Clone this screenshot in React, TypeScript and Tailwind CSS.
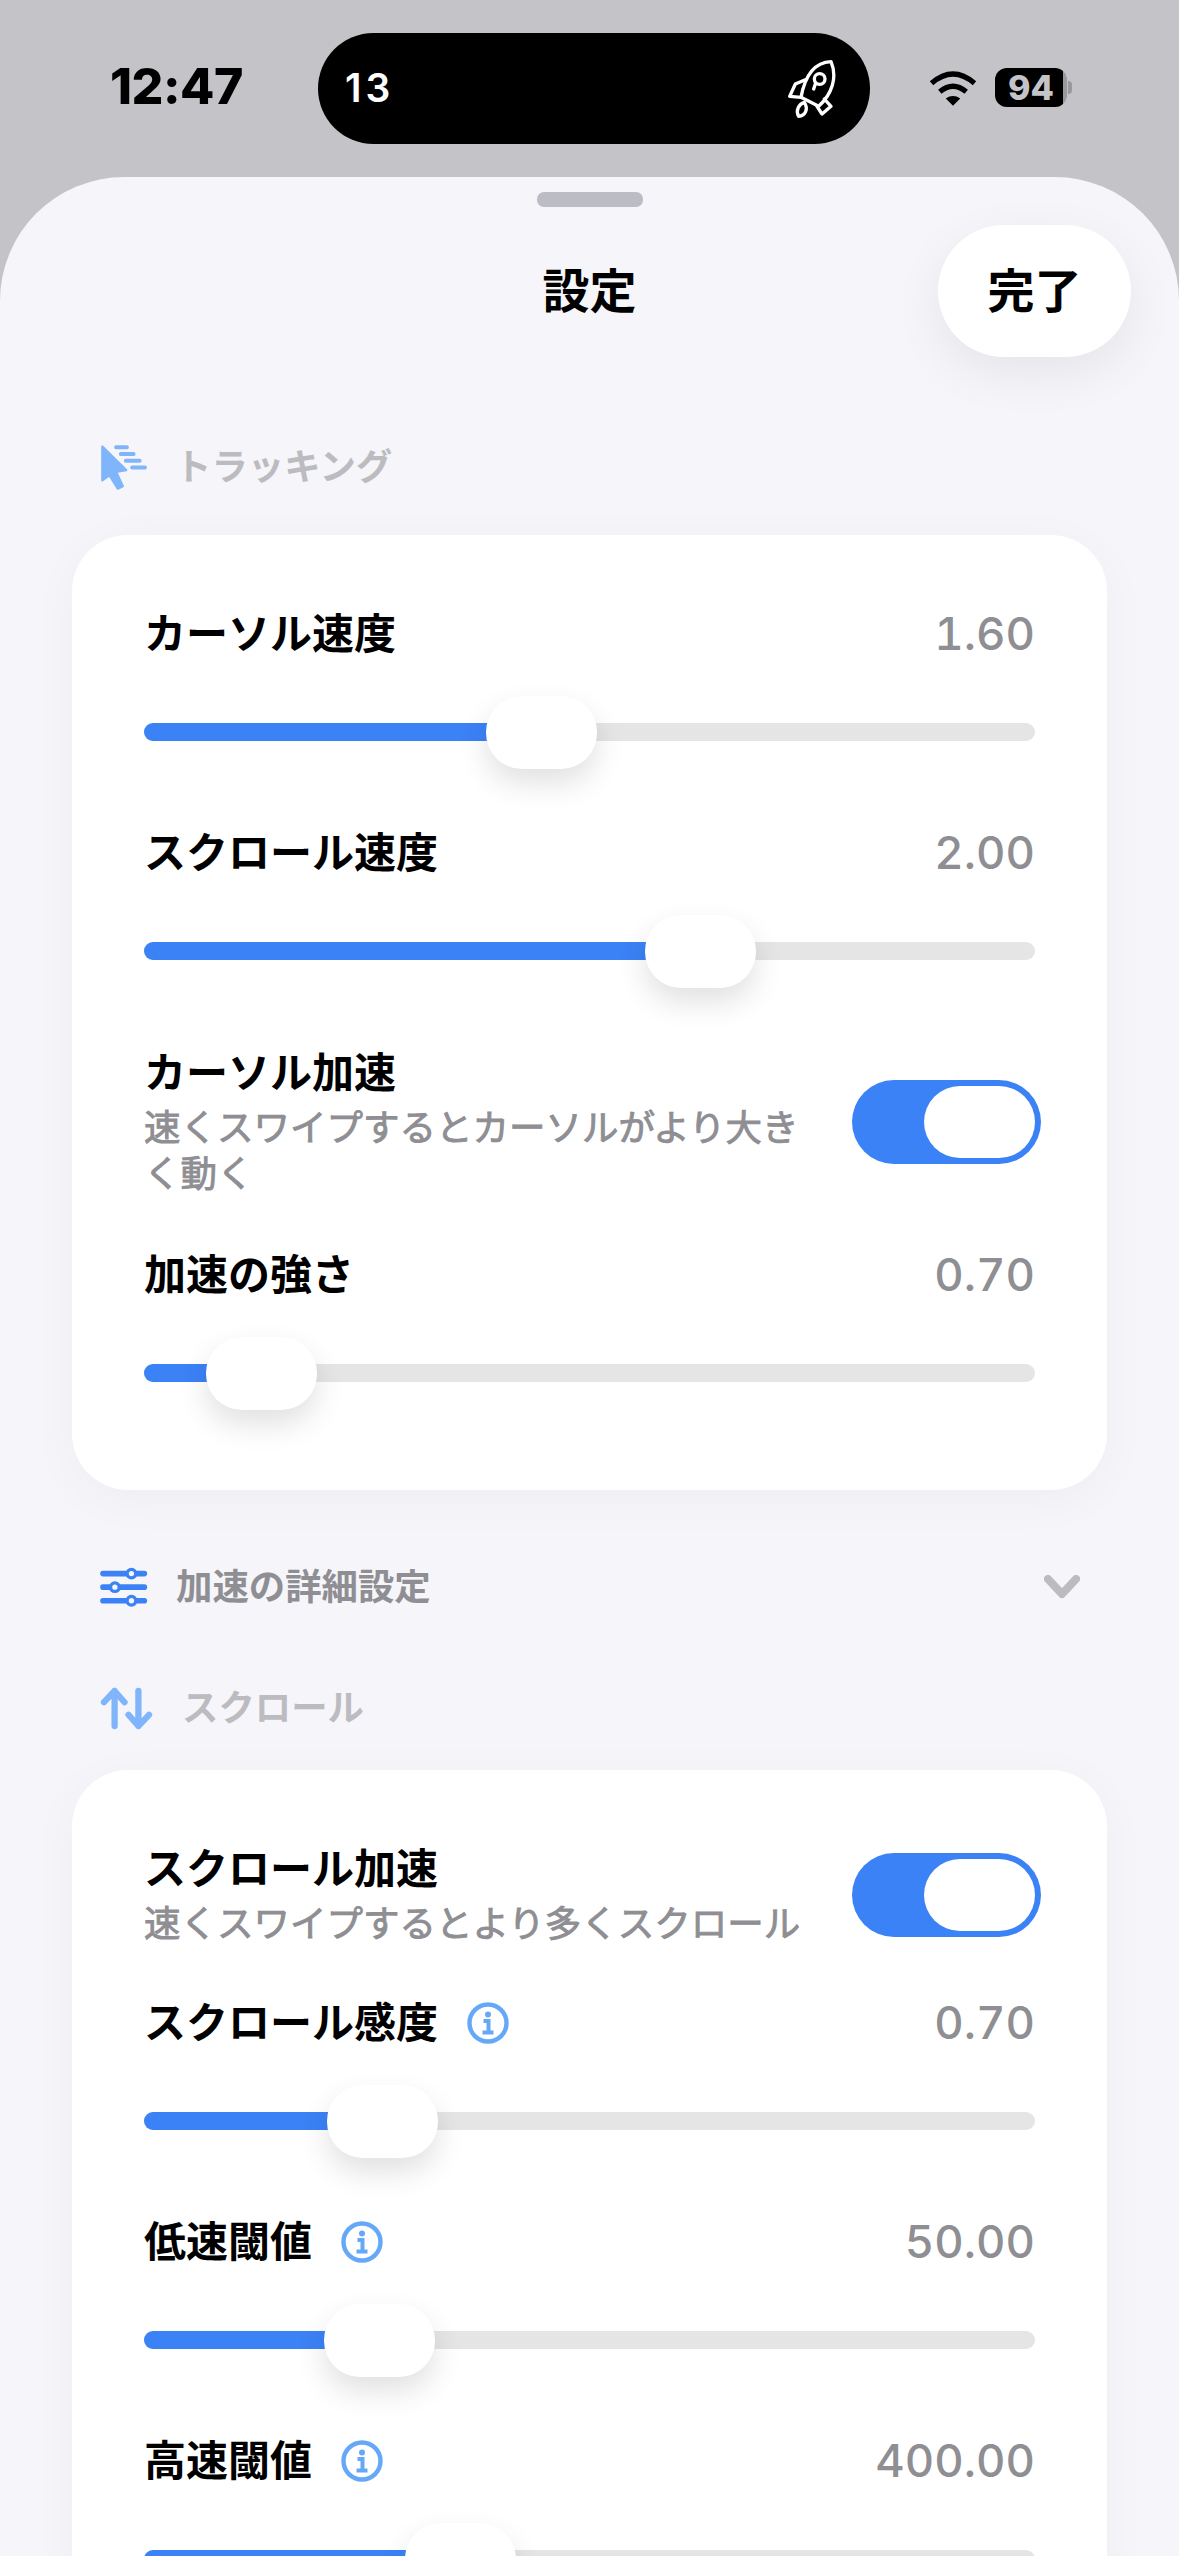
const track = 891

const Slider = ({ thumb }: { thumb: number }) => (
  <div className="relative mt-[34px] flex h-[73px] items-center">
    <div className="h-[18px] w-full overflow-hidden rounded-full bg-[#e5e5e5]">
      <div className="h-full bg-[#3b82f6]" style={{ width: (thumb / track) * 100 + '%' }} />
    </div>
    <div
      className="absolute top-[1px] h-[73px] w-[111px] rounded-[36px] bg-white shadow-[0_14px_30px_rgba(0,0,0,0.12)]"
      style={{ left: thumb - 1 }}
    />
  </div>
)

const InfoIcon = () => (
  <svg viewBox="0 0 42 42" className="h-[42px] w-[42px] shrink-0" fill="none" stroke="#66a8f8">
    <circle cx="21" cy="21" r="18.5" strokeWidth="4.4" />
    <circle cx="21" cy="12.5" r="3" fill="#66a8f8" stroke="none" />
    <path d="M16.5 19h5v11M15.5 30.5h11" strokeWidth="4" />
  </svg>
)

const Row = ({
  label,
  value,
  thumb,
  info,
  className
}: {
  label: string
  value: string
  thumb: number
  info?: boolean
  className?: string
}) => (
  <div className={className}>
    <div className="flex h-[54px] items-center justify-between">
      <div className="flex items-center gap-[29px]">
        <span className="text-[42px] leading-[54px] font-bold text-black">{label}</span>
        {info && <InfoIcon />}
      </div>
      <span className="text-[45.5px] leading-[54px] font-medium text-[#8e8e93] tabular-nums">{value}</span>
    </div>
    <Slider thumb={thumb} />
  </div>
)

const Toggle = () => (
  <div className="mr-[-6px] flex h-[84px] w-[189px] shrink-0 items-center justify-end rounded-full bg-[#3b82f6] pr-[6px]">
    <div className="h-[72px] w-[111px] rounded-full bg-white" />
  </div>
)

const ToggleRow = ({ label, sub, className }: { label: string; sub: string; className?: string }) => (
  <div className={'flex items-center justify-between ' + (className ?? '')}>
    <div className="w-[670px]">
      <div className="text-[42px] leading-[54px] font-bold text-black">{label}</div>
      <div className="mt-[5px] text-[36.5px] leading-[46px] font-normal text-[#8e8e93] [-webkit-text-stroke:0.9px_#8e8e93]">{sub}</div>
    </div>
    <Toggle />
  </div>
)

const RocketIcon = () => (
  <svg viewBox="80 120 150 180" className="h-[60px] w-[50px]" fill="none" stroke="white" strokeWidth="10" strokeLinejoin="round" strokeLinecap="round">
    <path d="M212 128C165 130 135 165 122 235L175 262C215 225 232 175 212 128Z" />
    <path d="M135 182L105 195L88 232L122 235" />
    <path d="M192 240L212 262L185 285L170 262" />
    <path d="M132 250C115 255 105 275 115 292C135 290 145 270 132 250Z" />
    <circle cx="178" cy="180" r="16" />
    <path d="M166 192L160 210" />
  </svg>
)

const WifiIcon = () => (
  <svg viewBox="505 145 150 115" className="h-[38px] w-[50px]" fill="none" stroke="black" strokeWidth="16">
    <path d="M515 188Q580 132 645 188" />
    <path d="M540 214Q580 180 620 214" />
    <path d="M558 234L580 256L602 234Q580 220 558 234Z" fill="black" stroke="none" />
  </svg>
)

const CursorIcon = () => (
  <svg viewBox="60 72 140 140" className="h-[47px] w-[47px]" fill="#7fb5fa" stroke="#7fb5fa" strokeLinecap="round" strokeLinejoin="round">
    <path d="M67 80L138 150L108 155L128 198L113 205L88 165L67 180Z" strokeWidth="7" />
    <path d="M108 82H140M122 102H160M137 122H178M156 142H194" strokeWidth="12" fill="none" />
  </svg>
)

const SlidersIcon = () => (
  <svg viewBox="60 75 145 125" className="h-[42px] w-[48px]" fill="none" stroke="#3b82f6">
    <path d="M69 97H194M69 138H194M69 179H194" strokeWidth="17" strokeLinecap="round" />
    <circle cx="155" cy="97" r="13" fill="#f5f5fa" strokeWidth="10" />
    <circle cx="105" cy="138" r="13" fill="#f5f5fa" strokeWidth="10" />
    <circle cx="155" cy="179" r="13" fill="#f5f5fa" strokeWidth="10" />
  </svg>
)

const ArrowsIcon = () => (
  <svg viewBox="60 438 160 130" className="h-[43px] w-[53px]" fill="none" stroke="#80b5fb" strokeWidth="19" strokeLinecap="round" strokeLinejoin="round">
    <path d="M104 556V450M72 484L104 450L134 484" />
    <path d="M176 450V556M146 522L176 556L208 522" />
  </svg>
)

export default function App() {
  return (
    <div className="h-[2556px] w-[1179px] overflow-hidden bg-[#c4c4c8] font-['Inter','Noto_Sans_CJK_JP',sans-serif]">
      <div className="flex h-[177px] items-start pt-[33px] pl-[110px]">
        <span className="mt-[23px] w-[132px] text-[50px] leading-[60px] font-extrabold tracking-[-0.5px] whitespace-nowrap text-black">12:47</span>
        <div className="ml-[76px] flex h-[111px] w-[552px] items-center justify-between rounded-[56px] bg-black pr-[33px] pl-[27px]">
          <span className="text-[39px] font-semibold tracking-[4px] text-white">13</span>
          <RocketIcon />
        </div>
        <div className="mt-[36px] ml-[58px]">
          <WifiIcon />
        </div>
        <div className="mt-[35px] ml-[17px] flex items-center">
          <div className="relative h-[39px] w-[72px] overflow-hidden rounded-[12px] bg-[#98989d]">
            <div className="absolute inset-y-0 left-0 w-[68px] bg-black" />
            <span className="absolute inset-0 flex items-center justify-center text-[34px] font-extrabold text-[#c4c4c8]">94</span>
          </div>
          <div className="ml-[1px] h-[13px] w-[4px] rounded-r-full bg-[#98989d]" />
        </div>
      </div>

      <div className="h-[2379px] rounded-t-[124px] bg-[#f5f5fa]">
        <div className="mx-auto h-[15px] w-[106px] translate-y-[15px] rounded-[7px] bg-[#bcbcc4]" />
        <div className="mt-[33px] grid grid-cols-[1fr_auto_1fr] items-center px-[49px]">
          <div />
          <span className="text-[47px] font-bold text-black">設定</span>
          <div className="flex justify-end">
            <div className="flex h-[132px] w-[193px] translate-x-[1px] items-center justify-center rounded-[66px] bg-white text-[47px] font-bold text-black shadow-[0_16px_50px_rgba(0,0,0,0.07)]">
              完了
            </div>
          </div>
        </div>

        <div className="mt-[88px] flex h-[44px] items-center gap-[28px] pl-[100px]">
          <CursorIcon />
          <span className="text-[36.4px] font-bold text-[#bcbcc0]">トラッキング</span>
        </div>

        <div className="mx-[72px] mt-[46px] rounded-[56px] bg-white px-[72px] pt-[72px] pb-[81px] shadow-[0_10px_50px_rgba(0,0,0,0.035)]">
          <Row label="カーソル速度" value="1.60" thumb={343} />
          <Row className="mt-[58px]" label="スクロール速度" value="2.00" thumb={502} />
          <ToggleRow className="mt-[59px]" label="カーソル加速" sub="速くスワイプするとカーソルがより大きく動く" />
          <Row className="mt-[51px]" label="加速の強さ" value="0.70" thumb={63} />
        </div>

        <div className="mt-[75px] flex h-[44px] items-center pr-[99px] pl-[100px]">
          <SlidersIcon />
          <span className="ml-[28px] flex-1 text-[36.4px] font-bold text-[#8e8e93]">加速の詳細設定</span>
          <svg viewBox="0 0 36 24" className="h-[24px] w-[36px]" fill="none" stroke="#bcbcc0" strokeWidth="8" strokeLinecap="round" strokeLinejoin="round">
            <path d="M4 4L18 19L32 4" />
          </svg>
        </div>

        <div className="mt-[77px] flex h-[44px] items-center gap-[29px] pl-[100px]">
          <ArrowsIcon />
          <span className="text-[36.4px] font-bold text-[#bcbcc0]">スクロール</span>
        </div>

        <div className="mx-[72px] mt-[40px] rounded-[56px] bg-white px-[72px] pt-[72px] pb-[81px] shadow-[0_10px_50px_rgba(0,0,0,0.035)]">
          <ToggleRow label="スクロール加速" sub="速くスワイプするとより多くスクロール" />
          <Row className="mt-[49px]" label="スクロール感度" value="0.70" thumb={184} info />
          <Row className="mt-[58px]" label="低速閾値" value="50.00" thumb={181} info />
          <Row className="mt-[58px]" label="高速閾値" value="400.00" thumb={262} info />
        </div>
      </div>
    </div>
  )
}
